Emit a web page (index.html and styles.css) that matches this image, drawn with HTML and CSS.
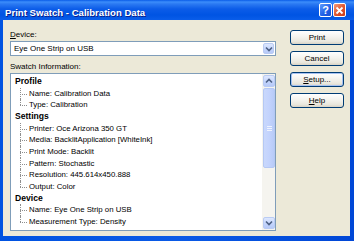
FILE: index.html
```html
<!DOCTYPE html>
<html lang="en">
<head>
	<meta charset="UTF-8">
	<title>Print Swatch - Calibration Data</title>
	<link rel="stylesheet" href="styles.css">
</head>
<body>
	<div class="window">
		<div class="titlebar">
			<span class="title">Print Swatch - Calibration Data</span>
			<div class="caption">
				<span class="cap-btn help">?</span>
				<span class="cap-btn close">
					<svg width="9" height="9" viewBox="0 0 9 9"><path d="M1.5 1.5 L7.5 7.5 M7.5 1.5 L1.5 7.5" stroke="#fff" stroke-width="1.8" fill="none"/></svg>
				</span>
			</div>
		</div>
		<div class="client">
			<div class="main">
				<div class="lbl"><u>D</u>evice:</div>
				<div class="combo">
					<span class="combo-text">Eye One Strip on USB</span>
					<span class="arrow-btn drop">
						<svg width="8" height="6" viewBox="0 0 8 6"><path d="M1 1.5 L4 4.5 L7 1.5" stroke="#4d6185" stroke-width="1.6" fill="none"/></svg>
					</span>
				</div>
				<div class="lbl info">Swatch Information:</div>
				<div class="tree">
					<div class="tree-body">
						<div class="node">Profile</div>
						<ul class="kids">
							<li>Name: Calibration Data</li>
							<li>Type: Calibration</li>
						</ul>
						<div class="node">Settings</div>
						<ul class="kids">
							<li>Printer: Oce Arizona 350 GT</li>
							<li>Media: BacklitApplication [WhiteInk]</li>
							<li>Print Mode: Backlit</li>
							<li>Pattern: Stochastic</li>
							<li>Resolution: 445.614x450.888</li>
							<li>Output: Color</li>
						</ul>
						<div class="node">Device</div>
						<ul class="kids">
							<li>Name: Eye One Strip on USB</li>
							<li>Measurement Type: Density</li>
						</ul>
					</div>
					<div class="vscroll">
						<span class="arrow-btn">
							<svg width="8" height="6" viewBox="0 0 8 6"><path d="M1 4.5 L4 1.5 L7 4.5" stroke="#4d6185" stroke-width="1.6" fill="none"/></svg>
						</span>
						<div class="thumb"><span class="grip"></span></div>
						<div class="track"></div>
						<span class="arrow-btn">
							<svg width="8" height="6" viewBox="0 0 8 6"><path d="M1 1.5 L4 4.5 L7 1.5" stroke="#4d6185" stroke-width="1.6" fill="none"/></svg>
						</span>
					</div>
				</div>
			</div>
			<div class="buttons">
				<div class="btn">Print</div>
				<div class="btn">Cancel</div>
				<div class="btn focus"><u>S</u>etup...</div>
				<div class="btn"><u>H</u>elp</div>
			</div>
		</div>
	</div>
</body>
</html>
```

FILE: styles.css
```css
* {
	margin: 0;
	padding: 0;
	box-sizing: border-box;
}
body {
	font-family: "Liberation Sans", Arial, sans-serif;
	font-size: 8px;
	color: #000;
	background: #0a4fd8;
}
.window {
	width: 354px;
	height: 241px;
	display: flex;
	flex-direction: column;
	background: linear-gradient(to right, #0053e1, #0a5ae6 50%, #0047d6);
}
.titlebar {
	height: 20px;
	flex: none;
	display: flex;
	justify-content: space-between;
	padding: 0 8px 0 5px;
	background: linear-gradient(to bottom, #0a5ce8 0%, #3c8dfb 10%, #2b79f2 20%, #0c5ce8 45%, #0054e3 75%, #0a5de9 100%);
}
.title {
	padding-top: 7px;
	font-size: 9.6px;
	line-height: 11px;
	font-weight: bold;
	color: #fff;
	text-shadow: 1px 1px 0 #0a1e8a;
	white-space: nowrap;
}
.caption {
	display: flex;
	gap: 1px;
	padding-top: 3px;
}
.cap-btn {
	width: 13px;
	height: 14px;
	border: 1px solid #fff;
	border-radius: 2px;
	display: flex;
	align-items: center;
	justify-content: center;
	color: #fff;
	font-weight: bold;
	font-size: 11px;
	line-height: 1;
}
.help {
	background: linear-gradient(135deg, #5e9bff, #1f5fe6 60%, #1a4fd0);
}
.close {
	background: linear-gradient(135deg, #f29a7a, #e0542c 55%, #c83c1a);
}
.client {
	flex: 1;
	display: flex;
	gap: 14px;
	margin: 0 4px 5px 3px;
	padding: 10px 6px 5px 7px;
	background: #ece9d8;
}
.main {
	width: 266px;
	display: flex;
	flex-direction: column;
}
.lbl {
	height: 10px;
	line-height: 10px;
	white-space: nowrap;
}
.lbl.info {
	margin-top: 6px;
}
.combo {
	margin-top: 1px;
	height: 15px;
	display: flex;
	align-items: center;
	justify-content: space-between;
	padding: 0 1px 0 3px;
	border: 1px solid #7f9db9;
	background: #fff;
}
.combo-text {
	font-size: 8px;
	line-height: 11px;
}
.arrow-btn {
	width: 12px;
	height: 12px;
	flex: none;
	display: flex;
	align-items: center;
	justify-content: center;
	border: 1px solid #b9cbf3;
	border-radius: 2px;
	background: linear-gradient(to bottom, #dde7fe, #c3d4fc 60%, #b6c9f8);
}
.drop {
	height: 11px;
	width: 11px;
}
.tree {
	margin-top: 1px;
	flex: 1;
	display: flex;
	border: 1px solid #7f9db9;
	background: #fff;
}
.tree-body {
	flex: 1;
	padding: 2px 0 0 4px;
	line-height: 11.67px;
	white-space: nowrap;
}
.node {
	font-weight: bold;
	font-size: 8.6px;
}
.kids {
	list-style: none;
	margin-left: 5px;
	font-size: 7.8px;
}
.kids li {
	position: relative;
	padding-left: 9px;
}
.kids li::before {
	content: "";
	position: absolute;
	left: 0;
	top: 6px;
	width: 7px;
	border-top: 1px dotted #8e8e8e;
}
.kids li::after {
	content: "";
	position: absolute;
	left: 0;
	top: 0;
	bottom: 0;
	border-left: 1px dotted #8e8e8e;
}
.kids li:last-child::after {
	bottom: auto;
	height: 6px;
}
.vscroll {
	width: 13px;
	display: flex;
	flex-direction: column;
	padding: 1px 0 1px 1px;
	background: #f5f4ef;
}
.thumb {
	height: 80px;
	margin-top: 1px;
	display: flex;
	align-items: center;
	justify-content: center;
	border: 1px solid #b5c8f4;
	border-radius: 2px;
	background: linear-gradient(to right, #c9d8fc, #c3d3fd 50%, #b8cbf8);
}
.grip {
	width: 5px;
	height: 5px;
	border-top: 1px solid #eef3ff;
	border-bottom: 1px solid #eef3ff;
	background: linear-gradient(to bottom, transparent 1px, #eef3ff 1px, #eef3ff 2px, transparent 2px);
}
.track {
	flex: 1;
}
.buttons {
	width: 54px;
	display: flex;
	flex-direction: column;
	gap: 6px;
}
.btn {
	height: 15px;
	display: flex;
	align-items: center;
	justify-content: center;
	border: 1px solid #003c74;
	border-radius: 3px;
	background: linear-gradient(to bottom, #ffffff, #f4f3ee 45%, #e9e7dd 80%, #d8d3c6);
	font-size: 8px;
}
.btn.focus {
	box-shadow: inset 0 0 0 1px #a6c2f2;
}
```
